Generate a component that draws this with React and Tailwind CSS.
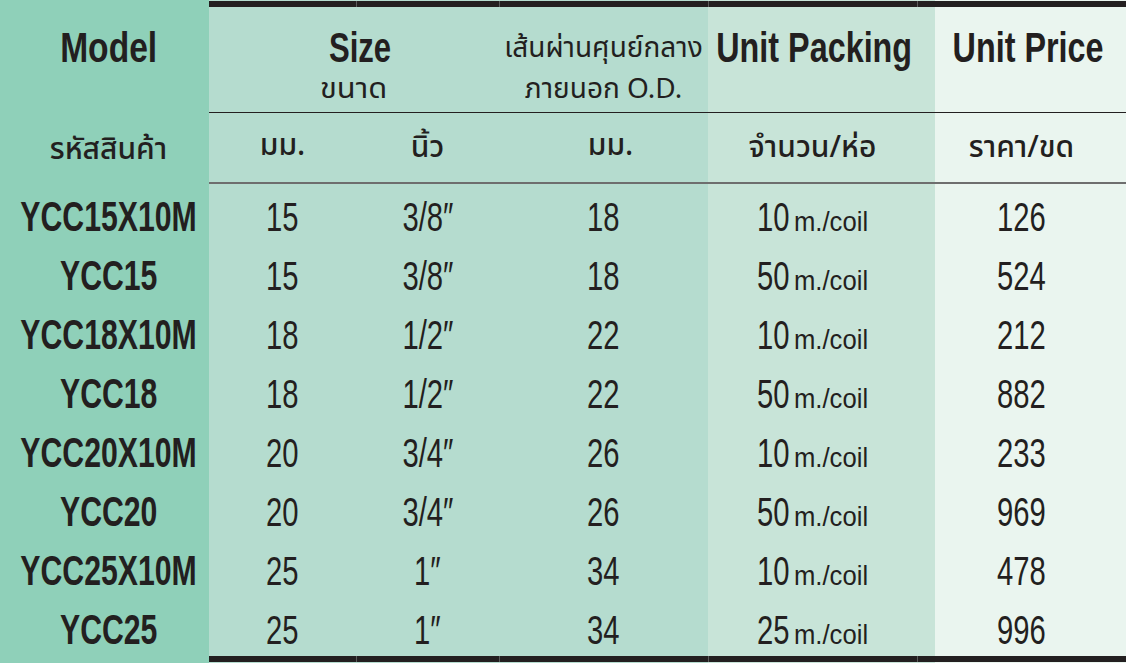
import React from "react";

const rows = [
  ["YCC15X10M", "15", "3/8″", "18", "10", "126"],
  ["YCC15", "15", "3/8″", "18", "50", "524"],
  ["YCC18X10M", "18", "1/2″", "22", "10", "212"],
  ["YCC18", "18", "1/2″", "22", "50", "882"],
  ["YCC20X10M", "20", "3/4″", "26", "10", "233"],
  ["YCC20", "20", "3/4″", "26", "50", "969"],
  ["YCC25X10M", "25", "1″", "34", "10", "478"],
  ["YCC25", "25", "1″", "34", "25", "996"],
];

const C1 = "bg-[#8fd0b9]";
const CS = "bg-[#b5dccf]";
const CP = "bg-[#c8e4d8]";
const CU = "bg-[linear-gradient(to_right,#c8e4d8_18px,#eaf5ef_18px)]";

const latin = "font-['Liberation_Sans',Arial,sans-serif]";
const thai = "font-['Noto_Sans_Thai','Noto_Sans','Noto_Sans_Thai_Looped',sans-serif]";

function BoldTitle({ children, scale = "scale-x-[0.77]" }) {
  return (
    <span className={`${latin} inline-block ${scale} whitespace-nowrap text-[42px] font-bold leading-[42px]`}>
      {children}
    </span>
  );
}

function Num({ children, bold }) {
  return (
    <span
      className={`${latin} inline-block whitespace-nowrap leading-[40px] ${
        bold ? "scale-x-[0.72] text-[42px] font-bold" : "scale-x-[0.73] text-[40px] font-normal"
      }`}
    >
      {children}
    </span>
  );
}

function ThaiSub({ children }) {
  return (
    <span className={`${thai} inline-block whitespace-nowrap text-[30px] font-medium leading-[40px]`}>
      {children}
    </span>
  );
}

function ThaiReg({ children, extra = "" }) {
  return (
    <span className={`${thai} inline-block whitespace-nowrap text-[28px] font-normal leading-[40px] ${extra}`}>
      {children}
    </span>
  );
}

export default function App() {
  const bar = "bg-[#231f20]";
  const line1 = "border-b border-[#231f20]";
  const line2 = "border-b-2 border-[#6e6e6e]";
  const cell = "flex items-center justify-center";
  return (
    <div className="h-[663px] w-[1126px] overflow-hidden bg-[#eaf5ef] text-[#231f20]">
      <div className="grid grid-cols-[209px_147px_143px_209px_209px_209px] grid-rows-[1px_6px_106px_71px_repeat(8,59px)_6px_1px]">
        {/* top spacer */}
        <div className={C1} />
        <div className={`${CS} col-span-3`} />
        <div className={CP} />
        <div className={CU} />
        {/* top bar */}
        <div className={C1} />
        <div className={`${bar}`} />
        <div className={`${bar} border-l border-[#5a5a5a]`} />
        <div className={`${bar} border-l border-[#5a5a5a]`} />
        <div className={`${bar} border-l border-[#5a5a5a]`} />
        <div className={`${bar} border-l border-[#5a5a5a]`} />

        {/* header 1 */}
        <div className={`${C1} row-span-2 flex flex-col pl-[8px]`}>
          <div className="flex h-[106px] justify-center pt-[20px]">
            <BoldTitle scale="scale-x-[0.8]">Model</BoldTitle>
          </div>
          <div className="flex h-[71px] items-center justify-center pt-[2px]">
            <ThaiSub>รหัสสินค้า</ThaiSub>
          </div>
        </div>
        <div className={`${CS} ${line1} col-span-2 flex flex-col items-center pt-[20px]`}>
          <div className="ml-[12px]">
            <BoldTitle scale="scale-x-[0.74]">Size</BoldTitle>
          </div>
          <div className="mt-[1px]">
            <ThaiReg extra="scale-x-[1.1]">ขนาด</ThaiReg>
          </div>
        </div>
        <div className={`${CS} ${line1} flex flex-col items-center pt-[22px]`}>
          <ThaiReg>เส้นผ่านศุนย์กลาง</ThaiReg>
          <div className="mt-[1px]">
            <ThaiReg>ภายนอก O.D.</ThaiReg>
          </div>
        </div>
        <div className={`${CP} ${line1} flex justify-center pt-[20px] pl-[4px]`}>
          <BoldTitle>Unit Packing</BoldTitle>
        </div>
        <div className={`${CU} ${line1} flex justify-center pt-[20px] pl-[14px]`}>
          <BoldTitle>Unit Price</BoldTitle>
        </div>

        {/* header 2 */}
        <div className={`${CS} ${line2} ${cell} pb-[4px]`}>
          <ThaiSub>มม.</ThaiSub>
        </div>
        <div className={`${CS} ${line2} ${cell}`}>
          <ThaiSub>นิ้ว</ThaiSub>
        </div>
        <div className={`${CS} ${line2} ${cell} pb-[4px] pl-[14px]`}>
          <ThaiSub>มม.</ThaiSub>
        </div>
        <div className={`${CP} ${line2} ${cell}`}>
          <ThaiSub>จำนวน/ห่อ</ThaiSub>
        </div>
        <div className={`${CU} ${line2} ${cell}`}>
          <ThaiSub>ราคา/ขด</ThaiSub>
        </div>

        {/* rows */}
        {rows.map((r) => (
          <React.Fragment key={r[0]}>
            <div className={`${C1} ${cell} pt-[6px] pl-[8px]`}>
              <Num bold>{r[0]}</Num>
            </div>
            <div className={`${CS} ${cell} pt-[6px]`}>
              <Num>{r[1]}</Num>
            </div>
            <div className={`${CS} ${cell} pt-[6px]`}>
              <Num>{r[2]}</Num>
            </div>
            <div className={`${CS} ${cell} pt-[6px]`}>
              <Num>{r[3]}</Num>
            </div>
            <div className={`${CP} ${cell} pt-[6px] pr-[4px]`}>
              <div className="flex items-baseline">
                <Num>{r[4]}</Num>
                <span
                  className={`${latin} ml-[-2px] inline-block w-[76px] whitespace-nowrap text-[27px] leading-[30px]`}
                >
                  <span className="inline-block origin-left scale-x-[0.95]">m./coil</span>
                </span>
              </div>
            </div>
            <div className={`${CU} ${cell} pt-[6px]`}>
              <Num>{r[5]}</Num>
            </div>
          </React.Fragment>
        ))}

        {/* bottom bar */}
        <div className={C1} />
        <div className={`${bar}`} />
        <div className={`${bar} border-l border-[#5a5a5a]`} />
        <div className={`${bar} border-l border-[#5a5a5a]`} />
        <div className={`${bar} border-l border-[#5a5a5a]`} />
        <div className={`${bar} border-l border-[#5a5a5a]`} />
        {/* bottom spacer */}
        <div className={C1} />
        <div className={`${CS} col-span-3`} />
        <div className={CP} />
        <div className={CU} />
      </div>
    </div>
  );
}
